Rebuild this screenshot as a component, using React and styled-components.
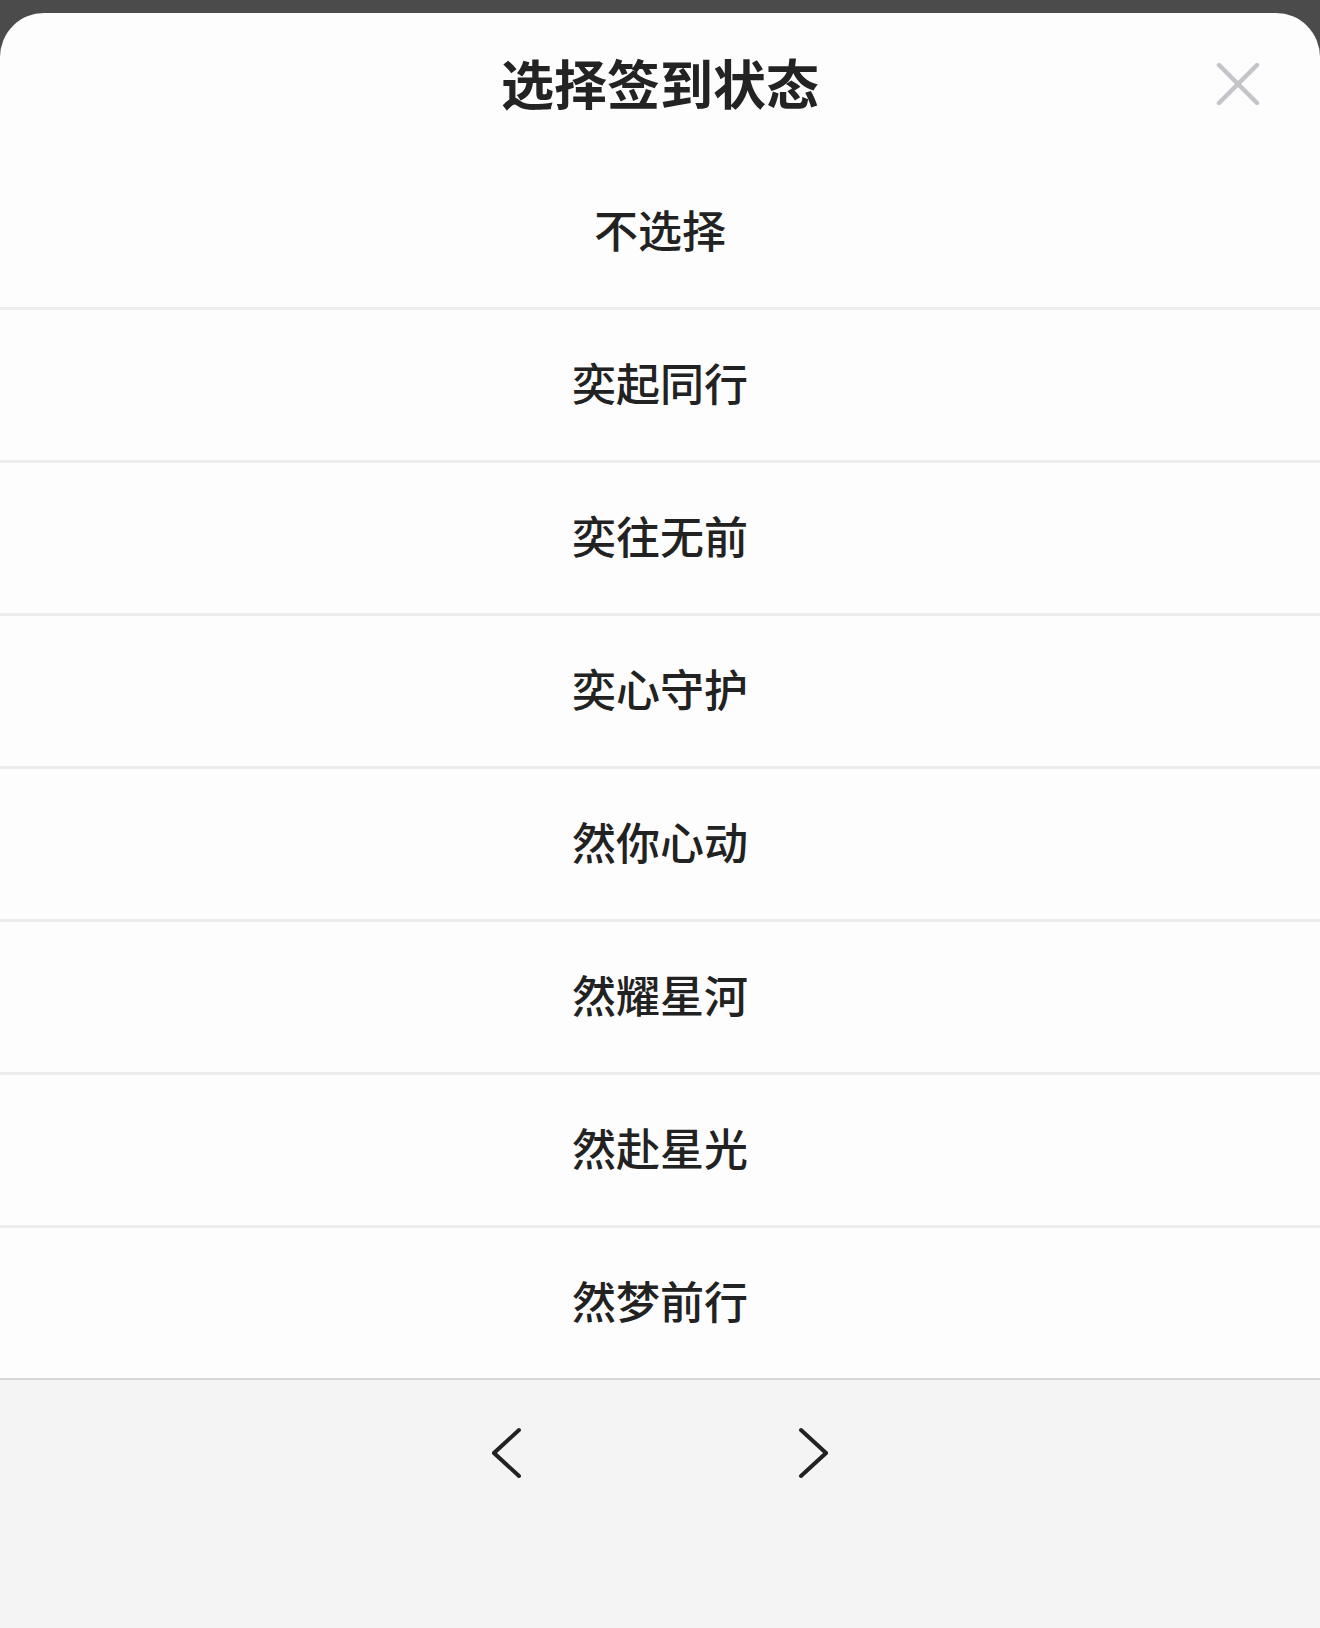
import React from "react";
import styled, { createGlobalStyle } from "styled-components";

const Global = createGlobalStyle`
  html, body { margin: 0; padding: 0; }
  body {
    background: #4b4b4b;
    font-family: "Noto Sans CJK SC", "Noto Sans", sans-serif;
  }
`;

const Screen = styled.div`
  padding-top: 13px;
  height: 1628px;
  box-sizing: border-box;
  background: #4b4b4b;
`;

const Sheet = styled.div`
  height: 1615px;
  background: #fdfdfd;
  border-radius: 44px 44px 0 0;
  display: flex;
  flex-direction: column;
  overflow: hidden;
`;

const Header = styled.div`
  height: 144px;
  display: grid;
  grid-template-columns: 1fr auto 1fr;
  align-items: center;
  padding: 0 60px 6px 60px;
  box-sizing: border-box;
`;

const Title = styled.h1`
  grid-column: 2;
  margin: 0;
  font-size: 53px;
  font-weight: 700;
  color: #232323;
  line-height: 1;
`;

const CloseButton = styled.button`
  grid-column: 3;
  justify-self: end;
  width: 44px;
  height: 42px;
  margin-top: 4px;
  padding: 0;
  border: none;
  background: none;
  display: flex;
  align-items: center;
  justify-content: center;
`;

const List = styled.div`
  display: flex;
  flex-direction: column;
`;

const Option = styled.div`
  height: 144px;
  padding-bottom: 6px;
  box-sizing: content-box;
  display: flex;
  align-items: center;
  justify-content: center;
  font-size: 44px;
  font-weight: 500;
  color: #222;
  border-bottom: ${(p) => (p.$last ? "none" : "3px solid #ededed")};
`;

const Footer = styled.div`
  flex: 1;
  background: #f4f4f4;
  border-top: 2px solid #d6d6d6;
`;

const Pager = styled.div`
  height: 146px;
  display: flex;
  align-items: center;
  justify-content: center;
  gap: 276px;
`;

const ArrowButton = styled.button`
  width: 30px;
  height: 52px;
  padding: 0;
  border: none;
  background: none;
  display: flex;
  align-items: center;
  justify-content: center;
`;

const options = [
  "不选择",
  "奕起同行",
  "奕往无前",
  "奕心守护",
  "然你心动",
  "然耀星河",
  "然赴星光",
  "然梦前行",
];

export default function App() {
  return (
    <>
      <Global />
      <Screen>
        <Sheet>
          <Header>
            <Title>选择签到状态</Title>
            <CloseButton aria-label="关闭">
              <svg width="44" height="42" viewBox="0 0 44 42">
                <path
                  d="M3 2 L41 40 M41 2 L3 40"
                  stroke="#c4c4c8"
                  strokeWidth="4.5"
                  strokeLinecap="round"
                  fill="none"
                />
              </svg>
            </CloseButton>
          </Header>
          <List>
            {options.map((o, i) => (
              <Option key={o} $last={i === options.length - 1}>
                {o}
              </Option>
            ))}
          </List>
          <Footer>
            <Pager>
              <ArrowButton aria-label="上一页">
                <svg width="30" height="52" viewBox="0 0 30 52">
                  <polyline
                    points="27,3 2,26 27,49"
                    stroke="#222"
                    strokeWidth="4"
                    strokeLinecap="round"
                    strokeLinejoin="miter"
                    fill="none"
                  />
                </svg>
              </ArrowButton>
              <ArrowButton aria-label="下一页">
                <svg width="30" height="52" viewBox="0 0 30 52">
                  <polyline
                    points="3,3 28,26 3,49"
                    stroke="#222"
                    strokeWidth="4"
                    strokeLinecap="round"
                    strokeLinejoin="miter"
                    fill="none"
                  />
                </svg>
              </ArrowButton>
            </Pager>
          </Footer>
        </Sheet>
      </Screen>
    </>
  );
}
